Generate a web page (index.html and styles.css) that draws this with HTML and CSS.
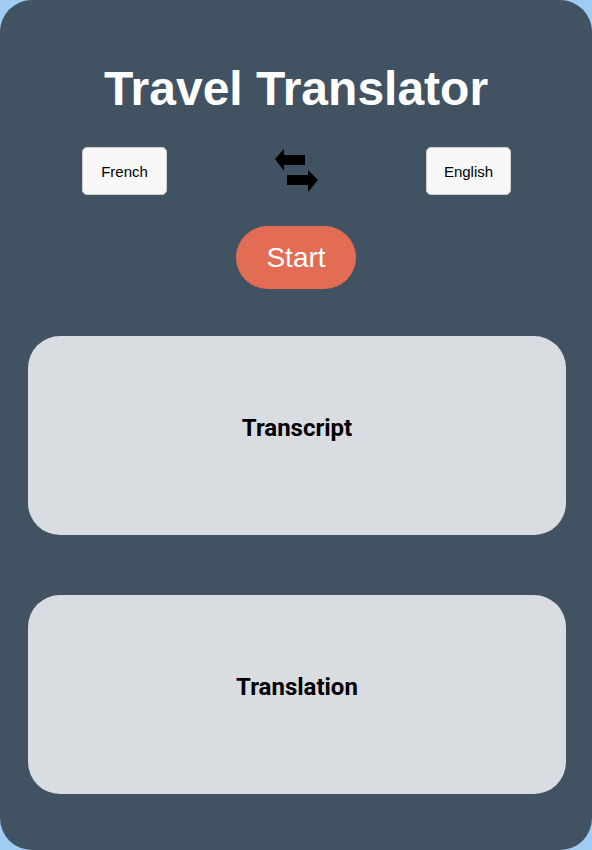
FILE: index.html
```html
<!DOCTYPE html>
<html>
<head>
<meta charset="utf-8">
<link rel="stylesheet" href="styles.css">
</head>
<body>
<main class="card">
  <h1 class="title">Travel Translator</h1>
  <div class="lang-row">
    <button class="lang-btn">French</button>
    <svg class="swap" width="46" height="46" viewBox="0 0 46 46">
      <path d="M1 11 L10 1 L10 7 L31 7 L31 17 L10 17 L10 23 Z" fill="#000"/>
      <path d="M44 32 L34 22 L34 27 L13 27 L13 37 L34 37 L34 44 Z" fill="#000"/>
    </svg>
    <button class="lang-btn">English</button>
  </div>
  <div class="start-wrap">
    <button class="start-btn">Start</button>
  </div>
  <section class="panel panel-first"><h2 class="panel-label">Transcript</h2></section>
  <section class="panel panel-second"><h2 class="panel-label">Translation</h2></section>
</main>
</body>
</html>
```

FILE: styles.css
```css
html, body {
  margin: 0;
  padding: 0;
  background: #a0ccf4;
}
.card {
  box-sizing: border-box;
  width: 592px;
  height: 850px;
  background: #415262;
  border-radius: 32px;
  padding-top: 61px;
  display: flex;
  flex-direction: column;
  font-family: "Liberation Sans", Arial, sans-serif;
}
.title {
  margin: 0;
  text-align: center;
  color: #ffffff;
  font-size: 48px;
  font-weight: 700;
  line-height: 56px;
}
.lang-row {
  margin-top: 30px;
  display: flex;
  justify-content: space-between;
  align-items: center;
  padding: 0 81px 0 82px;
}
.lang-btn {
  box-sizing: border-box;
  width: 85px;
  height: 48px;
  background: #f8f8f8;
  border: 1px solid #d0d0d0;
  border-radius: 5px;
  font-family: "Liberation Sans", Arial, sans-serif;
  font-size: 15px;
  color: #000;
  padding: 0;
}
.swap {
  display: block;
  margin-left: 1px;
}
.start-wrap {
  margin-top: 31px;
  display: flex;
  justify-content: center;
}
.start-btn {
  width: 120px;
  height: 63px;
  border: none;
  border-radius: 32px;
  background: #e26c54;
  color: #ffffff;
  font-family: "Liberation Sans", Arial, sans-serif;
  font-size: 28px;
  padding: 0;
}
.panel {
  box-sizing: border-box;
  margin: 0 26px 0 28px;
  height: 199px;
  background: #d9dce0;
  border-radius: 32px;
  display: flex;
  align-items: center;
  justify-content: center;
  padding-bottom: 16px;
}
.panel-first { margin-top: 47px; }
.panel-second { margin-top: 60px; }
.panel-label {
  margin: 0;
  font-family: Roboto, "Liberation Sans", sans-serif;
  font-weight: 700;
  font-size: 24px;
  color: #000;
}
```
